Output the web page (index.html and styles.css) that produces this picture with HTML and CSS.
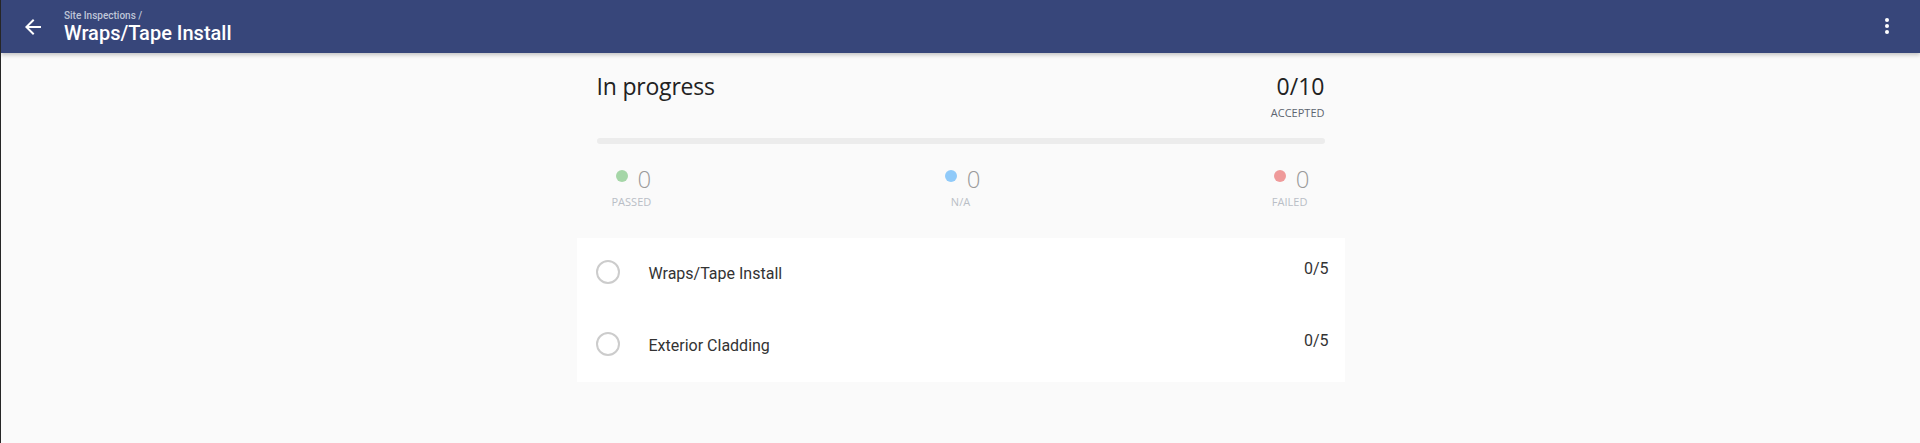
FILE: index.html
```html
<!DOCTYPE html>
<html lang="en">
<head>
<meta charset="utf-8">
<title>Wraps/Tape Install</title>
<link rel="stylesheet" href="styles.css">
</head>
<body>
<header class="topbar">
  <button class="icon-btn back" aria-label="Back">
    <svg viewBox="0 0 24 24" width="24" height="24"><path d="M20 11H7.83l5.59-5.59L12 4l-8 8 8 8 1.41-1.41L7.83 13H20v-2z" fill="currentColor"/></svg>
  </button>
  <div class="titles">
    <div class="crumb">Site Inspections /</div>
    <h1 class="title">Wraps/Tape Install</h1>
  </div>
  <button class="icon-btn more" aria-label="More">
    <svg viewBox="0 0 24 24" width="24" height="24"><circle cx="12" cy="6" r="2" fill="currentColor"/><circle cx="12" cy="12" r="2" fill="currentColor"/><circle cx="12" cy="18" r="2" fill="currentColor"/></svg>
  </button>
</header>
<main class="content">
  <section class="summary">
    <div class="summary-head">
      <div class="status">In progress</div>
      <div class="accepted">
        <div class="accepted-count">0/10</div>
        <div class="accepted-label">ACCEPTED</div>
      </div>
    </div>
    <div class="progress"><div class="progress-fill" style="width:0%"></div></div>
    <div class="stats">
      <div class="stat">
        <div class="stat-value"><span class="dot dot-pass"></span><span class="num">0</span></div>
        <div class="stat-label">PASSED</div>
      </div>
      <div class="stat">
        <div class="stat-value"><span class="dot dot-na"></span><span class="num">0</span></div>
        <div class="stat-label">N/A</div>
      </div>
      <div class="stat">
        <div class="stat-value"><span class="dot dot-fail"></span><span class="num">0</span></div>
        <div class="stat-label">FAILED</div>
      </div>
    </div>
  </section>
  <ul class="sections">
    <li class="section-row">
      <span class="check"></span>
      <span class="section-name">Wraps/Tape Install</span>
      <span class="section-count">0/5</span>
    </li>
    <li class="section-row">
      <span class="check"></span>
      <span class="section-name">Exterior Cladding</span>
      <span class="section-count">0/5</span>
    </li>
  </ul>
</main>
</body>
</html>
```
FILE: styles.css
```css
* { box-sizing: border-box; }

html, body { height: 100%; }

body {
  margin: 0;
  background: #fafafa;
  border-left: 1px solid #262626;
  font-family: Roboto, "Liberation Sans", sans-serif;
  color: #222;
}

.topbar {
  height: 53px;
  background: #37467a;
  color: #fff;
  display: flex;
  align-items: flex-start;
  padding: 0 20px;
  box-shadow: 0 2px 4px rgba(0, 0, 0, 0.22);
  position: relative;
}

.icon-btn {
  background: none;
  border: 0;
  padding: 0;
  width: 24px;
  height: 24px;
  color: #fff;
  display: flex;
}

.back { margin-top: 15px; }
.more { margin-top: 14px; margin-left: auto; margin-right: 1px; }

.titles {
  margin-left: 19px;
  padding-top: 10px;
}

.crumb {
  font-size: 10px;
  line-height: 12px;
  font-weight: 500;
  color: #bfc5d8;
}

.title {
  margin: 0;
  font-size: 20px;
  line-height: 22px;
  font-weight: 500;
  color: #fff;
}

.content {
  width: 768px;
  margin: 0 auto;
}

.summary {
  padding: 0 20px;
  font-family: "Open Sans", "Noto Sans", sans-serif;
}

.summary-head {
  display: flex;
  justify-content: space-between;
  margin-top: 17px;
}

.status {
  font-size: 23px;
  line-height: 32px;
  letter-spacing: -0.2px;
  color: #222;
}

.accepted { text-align: right; }

.accepted-count {
  font-size: 23px;
  line-height: 32px;
  color: #222;
}

.accepted-label {
  font-size: 11px;
  line-height: 21px;
  color: #5d6570;
}

.progress {
  margin-top: 15px;
  height: 6px;
  border-radius: 3px;
  background: #ececec;
  overflow: hidden;
}

.progress-fill { height: 100%; background: #8bc34a; }

.stats {
  display: flex;
  justify-content: space-between;
  padding: 0 15px;
  margin-top: 21px;
}

.stat {
  display: flex;
  flex-direction: column;
  align-items: center;
}

.stat-value {
  display: flex;
  align-items: flex-start;
  gap: 10px;
  padding-left: 4px;
}

.dot {
  width: 12px;
  height: 12px;
  border-radius: 50%;
  margin-top: 5px;
}

.dot-pass { background: #a5d6a7; }
.dot-na { background: #90caf9; }
.dot-fail { background: #ef9a9a; }

.num {
  font-size: 24px;
  line-height: 28px;
  font-weight: 300;
  color: #9a9a9a;
}

.stat-label {
  margin-top: 2px;
  font-size: 11px;
  line-height: 14px;
  color: #b9bec6;
}

.sections {
  list-style: none;
  margin: 29px 0 0;
  padding: 0;
  background: #fff;
}

.section-row {
  height: 72px;
  display: flex;
  align-items: flex-start;
  padding: 0 16px 0 19px;
}

.check {
  width: 24px;
  height: 24px;
  border: 2px solid #cccccc;
  border-radius: 50%;
  margin-top: 22px;
  flex: none;
}

.section-name {
  margin-left: 29px;
  margin-top: 26px;
  font-size: 16px;
  line-height: 20px;
  color: #333;
}

.section-count {
  margin-left: auto;
  margin-top: 21px;
  font-size: 16px;
  line-height: 20px;
  color: #333;
}
```
